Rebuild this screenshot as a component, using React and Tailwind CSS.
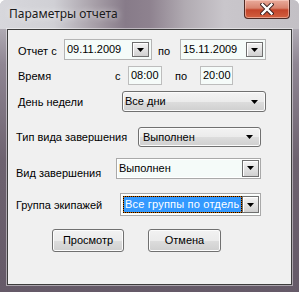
import React from 'react';

const Arrow = () => (
  <svg width="7" height="4" viewBox="0 0 7 4" className="block">
    <polygon points="0,0 7,0 3.5,4" fill="#000" />
  </svg>
);

// small square drop button used by date pickers and editable combos
const DropBtn = ({ className = '' }) => (
  <div className={`flex items-center justify-center border border-[#6f6f6f] bg-[linear-gradient(180deg,#f4f4f4_0%,#e2e2e2_50%,#d0d0d0_100%)] shadow-[inset_1px_1px_0_#ffffff] ${className}`}>
    <Arrow />
  </div>
);

const DatePicker = ({ value, w }) => (
  <div className={`flex items-center h-[21px] border border-[#b4b4b4] bg-[#f5fbf9] pl-[2px] pr-[2px] ${w}`}>
    <span className="flex-1 leading-none">{value}</span>
    <DropBtn className="w-[17px] h-[15px]" />
  </div>
);

const TimeBox = ({ value, w }) => (
  <div className={`flex items-center h-[19px] border border-[#bdbdbd] bg-[#f5fbf9] pl-[2px] ${w}`}>
    <span className="leading-none">{value}</span>
  </div>
);

const ListCombo = ({ value, w, h, pad }) => (
  <div className={`flex items-center ${h} ${w} ${pad} pr-[7px] rounded-[3px] border border-[#707070] bg-[linear-gradient(180deg,#f3f3f3_0%,#ebebeb_50%,#dddddd_51%,#cfcfcf_100%)] shadow-[inset_0_0_0_1px_#fbfbfb]`}>
    <span className="flex-1 leading-none">{value}</span>
    <Arrow />
  </div>
);

const EditCombo = ({ children, w, h }) => (
  <div className={`flex items-center ${h} ${w} border border-[#a9a9a9] bg-[#f5fbf9] pl-[2px] pr-[1px] shadow-[inset_0_0_0_1px_#ffffff]`}>
    <div className="flex-1 flex items-center min-w-0">{children}</div>
    <DropBtn className="w-[17px] h-[17px]" />
  </div>
);

const Button = ({ label, w, className = '' }) => (
  <div className={`flex items-center justify-center h-[23px] ${w} rounded-[3px] border border-[#707070] bg-[linear-gradient(180deg,#f2f2f2_0%,#ebebeb_50%,#dddddd_51%,#cfcfcf_100%)] shadow-[inset_0_0_0_1px_#fcfcfc] ${className}`}>
    <span className="leading-none">{label}</span>
  </div>
);

const App = () => {
  return (
    <div className="w-[299px] h-[292px] bg-white">
      <div className="flex flex-col w-[299px] h-[292px] rounded-t-[6px] overflow-hidden bg-[linear-gradient(180deg,#c9c8cd_0%,#8f8693_22%,#6d626f_55%,#655a68_100%)]">
        {/* title bar */}
        <div className="flex items-start h-[29px] bg-[linear-gradient(90deg,#d7d7dc_0%,#d0d0d5_18%,#a69ea7_32%,#877b89_42%,#8e828f_50%,#b1abb2_62%,#c9c6cb_75%,#c3c0c5_100%)]">
          <span className="ml-[9px] mt-[6px] leading-[16px] text-[12px] text-[#1a1a1a] font-['Noto_Sans','Open_Sans',sans-serif] [text-shadow:0_0_6px_rgba(255,255,255,0.9)]">
            Параметры отчета
          </span>
          <div className="ml-auto mr-[9px] w-[46px] h-[19px] flex items-center justify-center rounded-b-[4px] border border-t-0 border-[#4e2a24] bg-[linear-gradient(180deg,#e9ab9c_0%,#d8836e_45%,#c4442a_55%,#d2603f_100%)] shadow-[inset_0_0_0_1px_rgba(255,220,210,0.5)]">
            <svg width="14" height="12" viewBox="0 0 14 12">
              <path d="M2.5 1.5 L11.5 10.5 M11.5 1.5 L2.5 10.5" stroke="#3a2020" strokeWidth="4.2" strokeLinecap="square" />
              <path d="M2.5 1.5 L11.5 10.5 M11.5 1.5 L2.5 10.5" stroke="#ffffff" strokeWidth="2.4" strokeLinecap="square" />
            </svg>
          </div>
        </div>

        {/* client area */}
        <div className="ml-[7px] w-[285px] h-[256px] border border-[#3c3c3c] bg-[#f0f0f0] shadow-[0_0_0_1px_rgba(255,255,255,0.45)] flex flex-col text-[11px] text-black font-['Liberation_Sans',Tahoma,sans-serif]">
          {/* Отчет с ... по ... */}
          <div className="flex items-center h-[21px] mt-[9px]">
            <span className="ml-[10px] w-[46px] mt-[4px] leading-none">Отчет с</span>
            <DatePicker value="09.11.2009" w="w-[88px]" />
            <span className="ml-[6px] w-[22px] mt-[4px] leading-none">по</span>
            <DatePicker value="15.11.2009" w="w-[86px]" />
          </div>

          {/* Время */}
          <div className="flex items-center h-[19px] mt-[6px]">
            <span className="ml-[10px] w-[97px] mt-[2px] leading-none">Время</span>
            <span className="w-[13px] mt-[2px] leading-none">с</span>
            <TimeBox value="08:00" w="w-[34px]" />
            <span className="ml-[13px] w-[25px] mt-[2px] leading-none">по</span>
            <TimeBox value="20:00" w="w-[33px]" />
          </div>

          {/* День недели */}
          <div className="flex items-center h-[21px] mt-[6px]">
            <span className="ml-[10px] w-[104px] mt-[2px] leading-none">День недели</span>
            <ListCombo value="Все дни" w="w-[144px]" h="h-[21px]" pad="pl-[2px]" />
          </div>

          {/* Тип вида завершения */}
          <div className="flex items-center h-[20px] mt-[15px]">
            <span className="ml-[8px] w-[122px] mt-[1px] leading-none">Тип вида завершения</span>
            <ListCombo value="Выполнен" w="w-[123px]" h="h-[20px]" pad="pl-[4px]" />
          </div>

          {/* Вид завершения */}
          <div className="flex items-center h-[20px] mt-[11px]">
            <span className="ml-[8px] w-[100px] mt-[10px] leading-none">Вид завершения</span>
            <EditCombo w="w-[145px]" h="h-[21px]">
              <span className="leading-none">Выполнен</span>
            </EditCombo>
          </div>

          {/* Группа экипажей */}
          <div className="flex items-center h-[23px] mt-[15px]">
            <span className="ml-[8px] w-[104px] mt-[2px] leading-none">Группа экипажей</span>
            <EditCombo w="w-[141px]" h="h-[23px]">
              <span className="flex-1 flex items-center h-[17px] border border-dotted border-black bg-[#cc6600] whitespace-nowrap">
                <span className="flex-1 flex items-center h-[15px] bg-[#3399ff] text-white leading-none pl-[1px] tracking-[0.2px]">Все группы по отдель</span>
              </span>
            </EditCombo>
          </div>

          {/* buttons */}
          <div className="flex items-center mt-[13px]">
            <Button label="Просмотр" w="w-[72px]" className="ml-[44px]" />
            <Button label="Отмена" w="w-[73px]" className="ml-[24px]" />
          </div>
        </div>
      </div>
    </div>
  );
};

export default App;
